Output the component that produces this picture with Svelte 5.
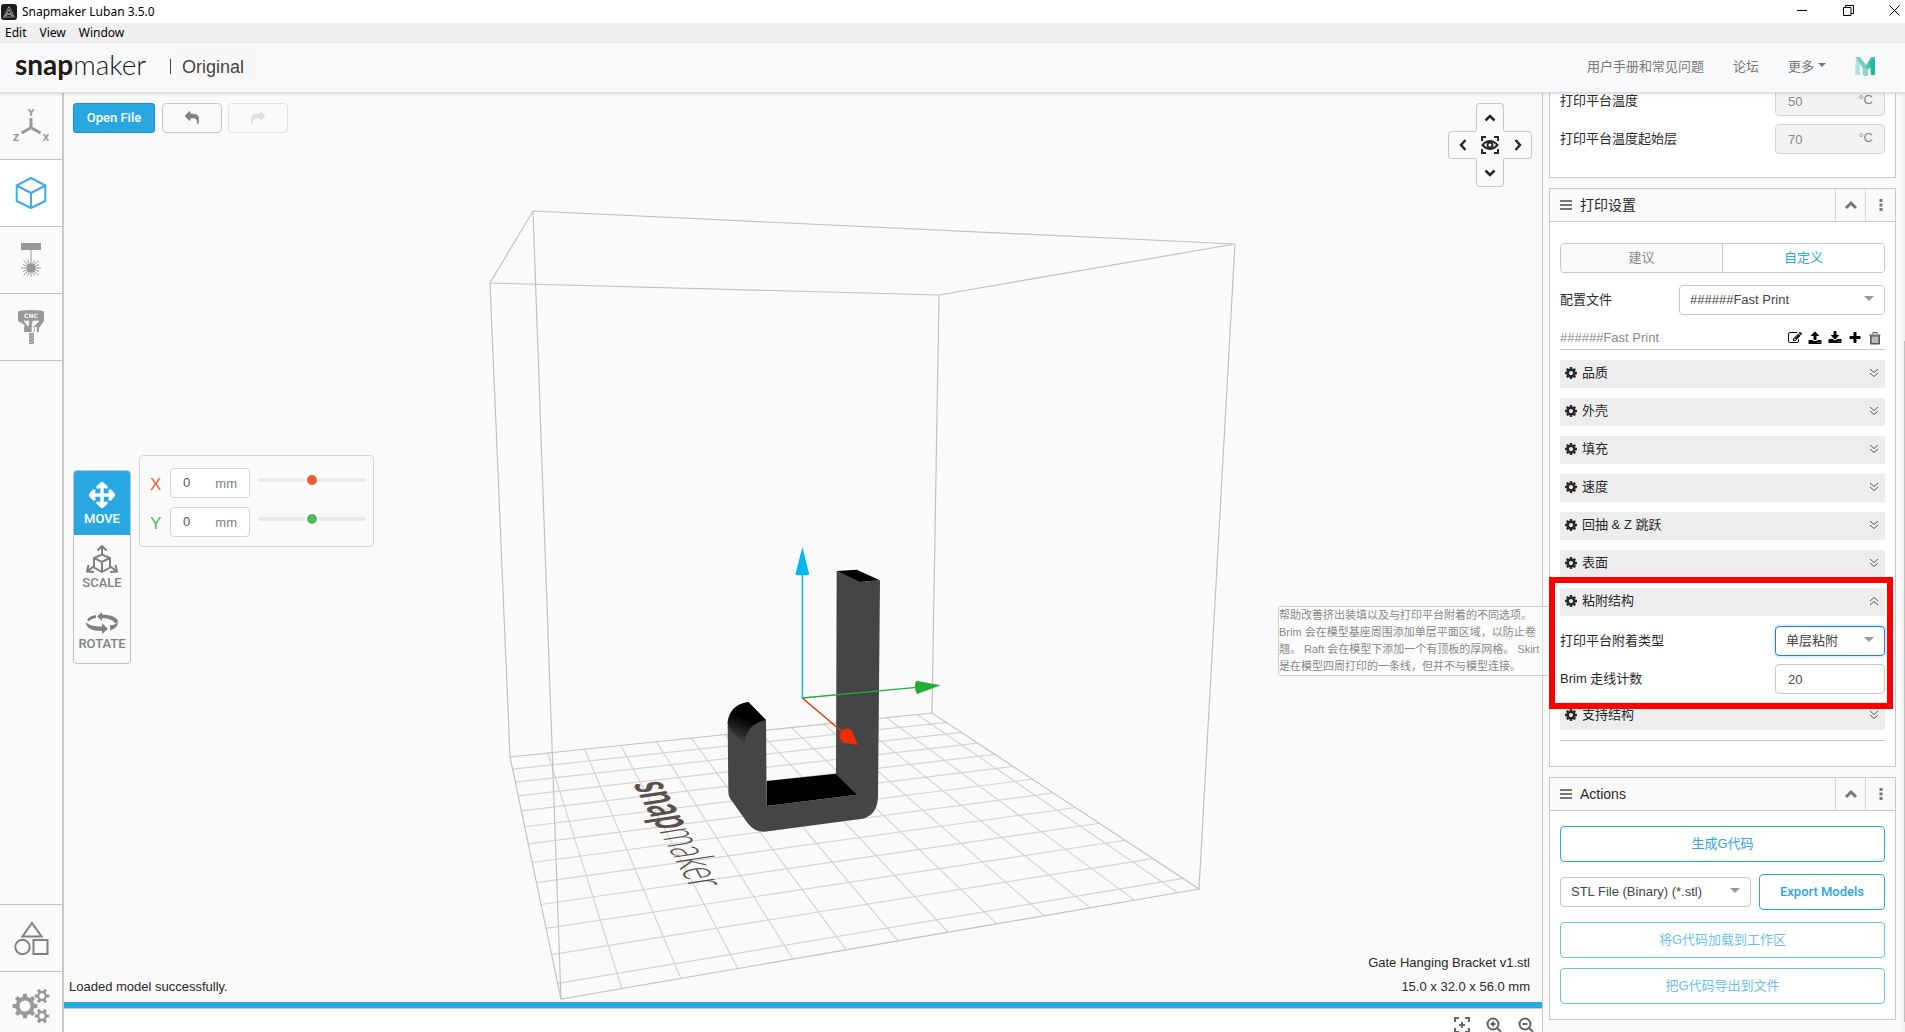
<script>
  const menus = ['Edit', 'View', 'Window'];
  const categories = ['品质', '外壳', '填充', '速度', '回抽 & Z 跳跃', '表面'];
  const temperatures = [
    { id: 'bed-temp', label: '打印平台温度', value: 50 },
    { id: 'bed-temp-first', label: '打印平台温度起始层', value: 70 },
  ];

  let moveX = $state(0);
  let moveY = $state(0);
  let tab = $state('custom');
  let brimCount = $state(20);

  const COG = 'M1152 896q0-106-75-181t-181-75-181 75-75 181 75 181 181 75 181-75 75-181zm512-109v222q0 12-8 23t-20 13l-185 28q-19 54-39 91 35 50 107 138 10 12 10 25t-9 23q-27 37-99 108t-94 71q-12 0-26-9l-138-108q-44 23-91 38-16 136-29 186-7 28-36 28h-222q-14 0-24.5-8.5t-11.5-21.5l-28-184q-49-16-90-37l-141 107q-10 9-25 9-14 0-25-11-126-114-165-168-7-10-7-23 0-12 8-23 15-21 51-66.5t54-70.5q-27-50-41-99l-183-27q-13-2-21-12.5t-8-23.5v-222q0-12 8-23t19-13l186-28q14-46 39-92-40-57-107-138-10-12-10-24 0-10 9-23 26-36 98.5-107.5t94.5-71.5q13 0 26 10l138 107q44-23 91-38 16-136 29-186 7-28 36-28h222q14 0 24.5 8.5t11.5 21.5l28 184q49 16 90 37l142-107q9-9 24-9 13 0 25 10 129 119 165 170 7 8 7 22 0 12-8 23-15 21-51 66.5t-54 70.5q26 50 41 98l183 28q13 2 21 12.5t8 23.5z';
  const SHARE = 'M1792 640q0 26-19 45l-512 512q-19 19-45 19t-45-19-19-45v-256h-224q-98 0-175.5 6t-154 21.5-133 42.5-105.5 69.5-80 101-48.5 138.5-17.5 181q0 55 5 123 0 6 2.5 23.5t2.5 26.5q0 15-8.5 25t-23.5 10q-16 0-28-17-7-9-13-22t-13.5-30-10.5-24q-127-285-127-451 0-199 53-333 162-403 875-403h224v-256q0-26 19-45t45-19 45 19l512 512q19 19 19 45z';
  const profileTools = [
    { name: 'Edit', d: 'M888 1184l116-116-152-152-116 116v56h96v96h56zm440-720q-16-16-33 1l-350 350q-17 17-1 33t33-1l350-350q17-17 1-33zm80 594v190q0 119-84.5 203.5t-203.5 84.5h-832q-119 0-203.5-84.5t-84.5-203.5v-832q0-119 84.5-203.5t203.5-84.5h832q63 0 117 25 15 7 18 23 3 17-9 29l-49 49q-14 14-32 8-23-6-45-6h-832q-66 0-113 47t-47 113v832q0 66 47 113t113 47h832q66 0 113-47t47-113v-126q0-13 9-22l64-64q15-15 35-7t20 29zm-96-738l288 288-672 672h-288v-288zm444 132l-92 92-288-288 92-92q28-28 68-28t68 28l152 152q28 28 28 68t-28 68z' },
    { name: 'Import', d: 'M1344 1472q0-26-19-45t-45-19-45 19-19 45 19 45 45 19 45-19 19-45zm256 0q0-26-19-45t-45-19-45 19-19 45 19 45 45 19 45-19 19-45zm128-224v320q0 40-28 68t-68 28h-1472q-40 0-68-28t-28-68v-320q0-40 28-68t68-28h427q21 56 70.5 92t110.5 36h256q61 0 110.5-36t70.5-92h427q40 0 68 28t28 68zm-325-648q-17 40-59 40h-256v448q0 26-19 45t-45 19h-256q-26 0-45-19t-19-45v-448h-256q-42 0-59-40-17-39 14-69l448-448q18-19 45-19t45 19l448 448q31 30 14 69z' },
    { name: 'Export', d: 'M1344 1344q0-26-19-45t-45-19-45 19-19 45 19 45 45 19 45-19 19-45zm256 0q0-26-19-45t-45-19-45 19-19 45 19 45 45 19 45-19 19-45zm128-224v320q0 40-28 68t-68 28h-1472q-40 0-68-28t-28-68v-320q0-40 28-68t68-28h465l135 136q58 56 136 56t136-56l136-136h464q40 0 68 28t28 68zm-325-569q17 41-14 70l-448 448q-18 19-45 19t-45-19l-448-448q-31-29-14-70 17-39 59-39h256v-448q0-26 19-45t45-19h256q26 0 45 19t19 45v448h256q42 0 59 39z' },
    { name: 'Add', d: 'M1600 736v192q0 40-28 68t-68 28h-416v416q0 40-28 68t-68 28h-192q-40 0-68-28t-28-68v-416h-416q-40 0-68-28t-28-68v-192q0-40 28-68t68-28h416v-416q0-40 28-68t68-28h192q40 0 68 28t28 68v416h416q40 0 68 28t28 68z' },
  ];

  // build volume corners on screen: back-left, back-right, front-right, front-left
  const top = [[490, 283], [939, 295], [1235, 244], [533, 211]];
  const bottom = [[510, 757], [932, 713], [1199, 889], [561, 999]];
  const CELLS = 12.5;

  // perspective mapping of the unit square onto the print bed
  function project(u, v) {
    const [[x0, y0], [x1, y1], [x2, y2], [x3, y3]] = bottom;
    const sx = x0 - x1 + x2 - x3;
    const sy = y0 - y1 + y2 - y3;
    const det = (x1 - x2) * (y3 - y2) - (x3 - x2) * (y1 - y2);
    const g = (sx * (y3 - y2) - (x3 - x2) * sy) / det;
    const h = ((x1 - x2) * sy - sx * (y1 - y2)) / det;
    const w = g * u + h * v + 1;
    return [
      ((x1 - x0 + g * x1) * u + (x3 - x0 + h * x3) * v + x0) / w,
      ((y1 - y0 + g * y1) * u + (y3 - y0 + h * y3) * v + y0) / w,
    ];
  }

  const bedLines = [];
  for (let i = 1; i < CELLS; i++) {
    const t = i / CELLS;
    bedLines.push([project(t, 0), project(t, 1)], [project(0, t), project(1, t)]);
  }

  const points = (list) => list.map((p) => p.join(',')).join(' ');

  function gear(cx, cy, r, root, teeth) {
    const out = [];
    const step = (Math.PI * 2) / teeth;
    for (let i = 0; i < teeth; i++) {
      const a = i * step;
      for (const [k, rad] of [[-0.3, root], [-0.2, r], [0.2, r], [0.3, root]]) {
        out.push([cx + rad * Math.cos(a + k * step), cy + rad * Math.sin(a + k * step)]);
      }
    }
    return points(out);
  }
</script>

{#snippet cog()}
  <svg class="cog" viewBox="0 0 1792 1792"><path d={COG} /></svg>
{/snippet}

{#snippet category(name, open)}
  <button class="category">
    {@render cog()}
    <span>{name}</span>
    <svg class="double" class:open viewBox="0 0 10 10"><path d="M1 1l4 3.500 4-3.500M1 5l4 3.500 4-3.500" /></svg>
  </button>
{/snippet}

{#snippet cardHeader(title)}
  <header class="card-header">
    <svg class="bars" viewBox="0 0 12 12"><path d="M0 2h12M0 6h12M0 10h12" /></svg>
    <h3>{title}</h3>
    <button class="head-btn" aria-label="Collapse">
      <svg width="14" height="10" viewBox="0 0 14 10"><path d="M2 8l5-5 5 5" fill="none" stroke="#777" stroke-width="3" /></svg>
    </button>
    <button class="head-btn" aria-label="More">
      <svg width="4" height="12" viewBox="0 0 4 12"><path d="M0.500 0h3v3h-3zM0.500 4.500h3v3h-3zM0.500 9h3v3h-3z" fill="#777" /></svg>
    </button>
  </header>
{/snippet}

{#snippet axisRow(name, value, color)}
  <div class="axis-row">
    <label for="move-{name}" class="axis-{color}">{name}</label>
    <div class="axis-input">
      <input id="move-{name}" type="text" {value} />
      <span>mm</span>
    </div>
    <input type="range" class="slider thumb-{color}" min="-160" max="160" {value} aria-label="{name} position" />
  </div>
{/snippet}

<div class="window">
  <div class="titlebar">
    <svg width="16" height="16" viewBox="0 0 16 16">
      <rect width="16" height="16" rx="3" fill="#1b1b1b" />
      <path d="M8 2.500L13.500 13h-11zM8 5.500l-3.500 7M8 5.500l3 7M5 9.500l7 2M11 8.500L3.500 12" fill="none" stroke="#aaa" stroke-width=".8" />
    </svg>
    <span class="title">Snapmaker Luban 3.5.0</span>
    <div class="window-controls">
      <button aria-label="Minimize"><svg width="11" height="11" viewBox="0 0 11 11"><path d="M0 5.500h10" /></svg></button>
      <button aria-label="Restore"><svg width="11" height="11" viewBox="0 0 11 11"><path d="M.5 2.500h7.500v8h-7.500zM2.500 2.500v-2h8v8h-2.500" /></svg></button>
      <button aria-label="Close"><svg width="11" height="11" viewBox="0 0 11 11"><path d="M.5.5l10 10M10.500.5l-10 10" /></svg></button>
    </div>
  </div>

  <nav class="menubar">
    {#each menus as menu}
      <button>{menu}</button>
    {/each}
  </nav>

  <header class="navbar">
    <a class="brand" href="#home"><b>snap</b>maker</a>
    <span class="machine"><i></i>Original</span>
    <nav class="links">
      <a href="#faq">用户手册和常见问题</a>
      <a href="#forum">论坛</a>
      <a href="#more" class="more">更多</a>
      <a href="#mysnap" aria-label="MyMiniFactory">
        <svg width="21" height="19" viewBox="0 0 21 19">
          <path d="M1 0h4v18h-5z" fill="#b5e3db" />
          <path d="M1 0h4l6 8 0 10h-3v-6z" fill="#7accbe" />
          <path d="M16 0h4v5l-7 8-5 1z" fill="#4cc3ae" />
          <path d="M15 5l5-5v18h-4z" fill="#22b89f" />
          <path d="M8 10l3 2 2-1v8h-4z" fill="#8ed6ca" />
        </svg>
      </a>
    </nav>
  </header>

  <div class="body">
    <aside class="sidebar">
      <button aria-label="Workspace">
        <svg width="36" height="34" viewBox="0 0 36 34">
          <path d="M18 9v10M17.500 19l-9 5M18.500 19l9 5" stroke="#999" stroke-width="3" />
          <text x="18" y="7" class="axis-glyph">Y</text>
          <text x="3" y="32" class="axis-glyph">Z</text>
          <text x="33" y="32" class="axis-glyph">X</text>
        </svg>
      </button>
      <button class="active" aria-label="3D printing">
        <svg width="32" height="34" viewBox="0 0 32 34">
          <path d="M16 2l14.300 7.500v15.500L16 32 1.700 25V9.500zM1.700 9.500L16 17l14.300-7.500M16 17v15" fill="none" stroke="#3fa9f5" stroke-width="2" stroke-linejoin="round" />
        </svg>
      </button>
      <button aria-label="Laser">
        <svg width="22" height="36" viewBox="0 0 22 36">
          <path d="M1 1h20v7H1z" fill="#999" />
          <circle cx="11" cy="26" r="4.500" fill="#999" />
          <path d="M11 8v27M1 26h20M3.500 18.500l15 15M18.500 18.500l-15 15M7.500 18l7 16M14.500 18l-7 16M3 22.500l16 7M19 22.500l-16 7" stroke="#999" stroke-width="1" />
        </svg>
      </button>
      <button aria-label="CNC">
        <svg width="28" height="36" viewBox="0 0 28 36">
          <path d="M1 3q0-2 13-2t13 2v9l-5 7v4H7v-7L1 12z" fill="#999" />
          <path d="M7 12l4 5 1-5zM16 12l-1 5h2l5-5zM15 18h1.500v5H15zM18 18h1.500v5H18zM4 13l4 5" fill="#fafafa" stroke="#fafafa" stroke-width=".7" />
          <text x="14" y="9" class="cnc-glyph">CNC</text>
          <path d="M12 24h5v11h-5z" fill="#bbb" />
          <path d="M12 26l5-2M12 29l5-2M12 32l5-2M12 35l5-2" stroke="#888" stroke-width="1" />
        </svg>
      </button>
      <div class="spacer"></div>
      <button aria-label="Models">
        <svg width="36" height="36" viewBox="0 0 36 36" fill="none" stroke="#808080" stroke-width="2">
          <path d="M19 3L28.500 16.500h-19zM20.500 20h14v14h-14z" />
          <circle cx="9.500" cy="27" r="7.200" />
        </svg>
      </button>
      <button aria-label="Settings">
        <svg width="38" height="36" viewBox="0 0 38 36">
          <polygon points={gear(13, 18, 12.5, 9.5, 8)} fill="#999" />
          <circle cx="13" cy="18" r="5.500" fill="#fafafa" />
          <polygon points={gear(30, 8, 7.5, 5, 6)} fill="#999" />
          <circle cx="30" cy="8" r="2.700" fill="#fafafa" />
          <polygon points={gear(30, 28, 7.5, 5, 6)} fill="#999" />
          <circle cx="30" cy="28" r="2.700" fill="#fafafa" />
        </svg>
      </button>
    </aside>

    <main class="visualizer">
      <div class="canvas">
        <svg class="scene" viewBox="64 93 1478 909" preserveAspectRatio="xMidYMid meet">
          <defs>
            <linearGradient id="hook" gradientUnits="userSpaceOnUse" x1="205" y1="540" x2="165" y2="635">
              <stop offset=".25" stop-color="#000" />
              <stop offset="1" stop-color="#454545" />
            </linearGradient>
          </defs>
          {#each bedLines as [a, b]}
            <line x1={a[0]} y1={a[1]} x2={b[0]} y2={b[1]} class="bed-line" />
          {/each}
          <text class="bed-logo" transform="matrix(.46 .83 -1.95 .3 633 784)"><tspan class="heavy">snap</tspan>maker</text>
          <polygon points={points(bottom)} class="volume" />
          <polygon points={points(top)} class="volume" />
          {#each top as corner, i}
            <line x1={corner[0]} y1={corner[1]} x2={bottom[i][0]} y2={bottom[i][1]} class="volume" />
          {/each}
          <g transform="translate(680 530) scale(.33333)">
            <path d="M470 123L538 156 600 151 594 800Q592 862 535 868L252 905Q222 905 202 878L150 805Q145 797 145 780L143 575Q150 524 205 516L258 570 260 828 532 794 468 731z" fill="#454545" />
            <path d="M470 123L530 119 600 151 538 156z" fill="#000" />
            <path d="M260 753L468 731 532 794 260 828z" fill="#000" />
            <path d="M143 578Q150 524 205 516L258 570Q200 580 193 640L150 600z" fill="url(#hook)" />
            <path d="M367 505V130" stroke="#00b7f1" stroke-width="4" />
            <path d="M367 51L388 134Q367 138 346 134z" fill="#00b7f1" />
            <path d="M367 504L710 472" stroke="#22ac38" stroke-width="4" />
            <path d="M782 466L711 492Q700 472 708 452z" fill="#22ac38" />
            <path d="M367 504L490 608" stroke="#eb2f00" stroke-width="4" />
            <path d="M534 645L490 638Q475 626 480 610 490 592 510 597L516 602z" fill="#eb2f00" />
          </g>
        </svg>

        <div class="toolbar">
          <button class="open-file">Open File</button>
          <button class="tool" aria-label="Undo"><svg class="flip" width="14" height="14" viewBox="0 0 1792 1792"><path d={SHARE} /></svg></button>
          <button class="tool" aria-label="Redo" disabled><svg width="14" height="14" viewBox="0 0 1792 1792"><path d={SHARE} /></svg></button>
        </div>

        <div class="view-pad">
          <button class="up" aria-label="Top view"><svg width="12" height="12" viewBox="0 0 12 12"><path d="M1.500 8.500L6 4l4.500 4.500" /></svg></button>
          <button class="left" aria-label="Left view"><svg width="12" height="12" viewBox="0 0 12 12"><path d="M8.500 1L4 6l4.500 5" /></svg></button>
          <button class="center" aria-label="Reset view">
            <svg width="18" height="18" viewBox="0 0 18 18">
              <path d="M1 5V1h4M13 1h4v4M17 13v4h-4M5 17H1v-4M1.500 9Q9 1 16.500 9 9 17 1.500 9z" />
              <circle cx="9" cy="9" r="2.500" />
            </svg>
          </button>
          <button class="right" aria-label="Right view"><svg width="12" height="12" viewBox="0 0 12 12"><path d="M3.500 1L8 6l-4.500 5" /></svg></button>
          <button class="down" aria-label="Bottom view"><svg width="12" height="12" viewBox="0 0 12 12"><path d="M1.500 3.500L6 8l4.500-4.500" /></svg></button>
        </div>

        <div class="transform">
          <div class="modes">
            <button class="selected">
              <svg width="28" height="28" viewBox="0 0 28 28" fill="none" stroke="#fff" stroke-width="3.500" stroke-linecap="round" stroke-linejoin="round">
                <path d="M14 3v22M3 14h22M10 6l4-3.500L18 6M10 22l4 3.500 4-3.500M6 10l-3.500 4L6 18M22 10l3.500 4-3.500 4" />
              </svg>
              MOVE
            </button>
            <button>
              <svg width="32" height="28" viewBox="0 0 32 28" fill="none" stroke="#808080" stroke-width="2">
                <path d="M16 1v8M11.500 5.500L16 1l4.500 4.500M8 13l8-3.500 8 3.500v9.500L16 27l-8-4.500zM8 13l8 4 8-4M16 17v10M8 21l-6 5M2.500 20L1 26.500l7 .5M24 21l6 5M29.500 20l1.500 6.500-7 .5" />
              </svg>
              SCALE
            </button>
            <button>
              <svg width="32" height="22" viewBox="0 0 32 22" fill="#808080">
                <path d="M11 4.500L16 0v2.500q15 .5 16 7.500l-3 1.500Q27 6.500 16 6v3zM1 8q2-4 9-5v3Q4 7 3 9.500zM0 10q3 4.500 16 4.500V11l6 6-6 5v-3Q0 19 0 10zM24 13.500q6-1 8-3.500 0 6-8 8.500z" />
              </svg>
              ROTATE
            </button>
          </div>
          <div class="move-panel">
            {@render axisRow('X', moveX, 'red')}
            {@render axisRow('Y', moveY, 'green')}
          </div>
        </div>

        <span class="status">Loaded model successfully.</span>
        <div class="model-info">
          <span>Gate Hanging Bracket v1.stl</span>
          <span>15.0 x 32.0 x 56.0 mm</span>
        </div>
      </div>
      <div class="progress"></div>
      <div class="zoom-bar">
        <button aria-label="Fit"><svg width="16" height="16" viewBox="0 0 16 16"><path d="M1 5V1h4M11 1h4v4M15 11v4h-4M5 15H1v-4M8 5v6M5 8h6" /></svg></button>
        <button aria-label="Zoom in"><svg width="16" height="16" viewBox="0 0 16 16"><circle cx="7" cy="7" r="5.500" /><path d="M11 11l4 4M7 4.500v5M4.500 7h5" /></svg></button>
        <button aria-label="Zoom out"><svg width="16" height="16" viewBox="0 0 16 16"><circle cx="7" cy="7" r="5.500" /><path d="M11 11l4 4M4.500 7h5" /></svg></button>
      </div>
    </main>

    <section class="settings">
      <div class="settings-list">
        <div class="card temps">
          {#each temperatures as t}
            <div class="row">
              <label for={t.id}>{t.label}</label>
              <div class="temp-input">
                <input id={t.id} type="text" value={t.value} disabled />
                <span>°C</span>
              </div>
            </div>
          {/each}
        </div>

        <div class="card">
          {@render cardHeader('打印设置')}
          <div class="card-body print">
            <div class="tabs">
              <button class:on={tab === 'recommended'} onclick={() => (tab = 'recommended')}>建议</button>
              <button class:on={tab === 'custom'} onclick={() => (tab = 'custom')}>自定义</button>
            </div>
            <div class="row profile">
              <label for="profile">配置文件</label>
              <div class="select wide">
                <select id="profile"><option>######Fast Print</option></select>
              </div>
            </div>
            <div class="profile-name">
              <span>######Fast Print</span>
              {#each profileTools as tool}
                <button aria-label={tool.name}><svg width="14" height="14" viewBox="0 0 1792 1792"><path d={tool.d} /></svg></button>
              {/each}
              <button aria-label="Delete">
                <svg width="14" height="14" viewBox="0 0 14 14" fill="none" stroke="#555">
                  <path d="M3 5h8v7.500H3z" fill="#bbb" /><path d="M1.500 4h11M5 3.500V1.500h4v2M2.500 4v9h9V4" />
                </svg>
              </button>
            </div>
            {#each categories as name}
              {@render category(name, false)}
            {/each}
            <div class="adhesion">
              {@render category('粘附结构', true)}
              <div class="row">
                <label for="adhesion">打印平台附着类型</label>
                <div class="select focused">
                  <select id="adhesion"><option>单层粘附</option></select>
                </div>
              </div>
              <div class="row">
                <label for="brim">Brim 走线计数</label>
                <input id="brim" class="number" type="text" bind:value={brimCount} />
              </div>
              <div class="highlight"></div>
              <div class="tooltip">
                帮助改善挤出装填以及与打印平台附着的不同选项。<br />Brim 会在模型基座周围添加单层平面区域，以防止卷<br />翘。 Raft 会在模型下添加一个有顶板的厚网格。 Skirt<br />是在模型四周打印的一条线，但并不与模型连接。
              </div>
            </div>
            {@render category('支持结构', false)}
            <hr />
          </div>
        </div>

        <div class="card">
          {@render cardHeader('Actions')}
          <div class="card-body actions">
            <button class="outline">生成G代码</button>
            <div class="export">
              <div class="select">
                <select aria-label="Export format"><option>STL File (Binary) (*.stl)</option></select>
              </div>
              <button class="outline strong">Export Models</button>
            </div>
            <button class="outline" disabled>将G代码加载到工作区</button>
            <button class="outline" disabled>把G代码导出到文件</button>
          </div>
        </div>
      </div>
      <div class="scrollbar"><i></i></div>
    </section>
  </div>
</div>

<style>
  :global(body) {
    margin: 0;
    background: #fafafa;
  }

  .window, .window * {
    box-sizing: border-box;
  }

  .window {
    display: flex;
    flex-direction: column;
    height: 100vh;
    overflow: hidden;
    font: 13px/20px 'Liberation Sans', 'Noto Sans CJK SC', sans-serif;
    color: #282828;
  }

  button, input, select {
    font: inherit;
    color: inherit;
    margin: 0;
    padding: 0;
    border: 0;
    background: none;
  }

  a {
    color: inherit;
    text-decoration: none;
  }

  svg {
    display: block;
    flex: none;
  }

  .titlebar {
    display: flex;
    align-items: center;
    height: 23px;
    padding-left: 1px;
    background: #fff;
    color: #000;
    font: 12px/18px 'Noto Sans', sans-serif;
    flex: none;
  }

  .title {
    margin-left: 5px;
  }

  .window-controls {
    display: flex;
    gap: 35px;
    margin-left: auto;
    padding: 0 5px 3px 0;
  }

  .window-controls path {
    fill: none;
    stroke: #000;
  }

  .menubar {
    display: flex;
    gap: 13px;
    height: 20px;
    padding-left: 5px;
    background: #efefef;
    color: #000;
    font: 12px/20px 'Noto Sans', sans-serif;
    flex: none;
  }

  .navbar {
    display: flex;
    align-items: center;
    height: 50px;
    padding: 0 29px 2px 15px;
    background: #f8f9fb;
    border-bottom: 1px solid #dedede;
    box-shadow: 0 1px 3px rgba(0, 0, 0, 0.15);
    flex: none;
    position: relative;
    z-index: 3;
  }

  .brand {
    width: 155px;
    padding-bottom: 6px;
    font: 300 28px/40px Lato, sans-serif;
    color: #231815;
  }

  .brand b {
    font-weight: 700;
  }

  .machine {
    display: flex;
    align-items: center;
    gap: 11px;
    padding-right: 12px;
    background: #f8f8f8;
    font: 18px/36px 'Liberation Sans', sans-serif;
    color: #444;
  }

  .machine i {
    width: 1px;
    height: 15px;
    background: #444;
  }

  .links {
    display: flex;
    align-items: center;
    gap: 29px;
    margin-left: auto;
    color: #777;
  }

  .more::after {
    content: '';
    display: inline-block;
    margin-left: 4px;
    vertical-align: 4px;
    border: 4px solid transparent;
    border-top-color: #777;
    border-bottom: 0;
  }

  .body {
    display: flex;
    flex: 1;
    min-height: 0;
  }

  .sidebar {
    display: flex;
    flex-direction: column;
    width: 64px;
    background: #fafafa;
    border-right: 2px solid #c8c8c8;
    flex: none;
  }

  .sidebar button {
    display: flex;
    align-items: center;
    justify-content: center;
    height: 67px;
    border-bottom: 1px solid #c0c0c0;
    flex: none;
  }

  .sidebar .spacer {
    flex: 1;
    border-bottom: 1px solid #c0c0c0;
  }

  .sidebar button:last-child {
    height: 60px;
    border: 0;
    padding-top: 7px;
  }

  .sidebar .active {
    background: #fff;
  }

  .axis-glyph {
    font: bold 9px 'DejaVu Sans', sans-serif;
    text-anchor: middle;
    fill: #999;
  }

  .cnc-glyph {
    font: bold 6px 'DejaVu Sans', sans-serif;
    text-anchor: middle;
    fill: #fafafa;
  }

  .visualizer {
    display: flex;
    flex-direction: column;
    flex: 1;
    min-width: 0;
  }

  .canvas {
    position: relative;
    flex: 1;
    min-height: 0;
    background: #fafafa;
  }

  .scene {
    position: absolute;
    inset: 0;
    width: 100%;
    height: 100%;
  }

  .bed-line {
    stroke: #d4d4d4;
    stroke-width: 1.200;
  }

  .volume {
    fill: none;
    stroke: #c2c2c2;
    stroke-width: 1.200;
  }

  .bed-logo {
    font: 300 27px Lato, sans-serif;
    fill: #5a504e;
  }

  .bed-logo .heavy {
    font-weight: 700;
  }

  .toolbar {
    position: absolute;
    top: 10px;
    left: 9px;
    display: flex;
    gap: 6px;
  }

  .open-file {
    width: 82px;
    height: 30px;
    margin-right: 1px;
    border: 1px solid #1a8fcb;
    border-radius: 3px;
    background: #28a7e1;
    color: #fff;
    font-family: Roboto, sans-serif;
    font-weight: 500;
  }

  .tool {
    display: flex;
    align-items: center;
    justify-content: center;
    width: 60px;
    height: 30px;
    border: 1px solid #c8c8c8;
    border-radius: 4px;
  }

  .tool path {
    fill: #808080;
    stroke: #808080;
    stroke-width: 90;
  }

  .tool:disabled {
    border-color: #e0e0e0;
  }

  .tool:disabled path {
    fill: #e0e0e0;
    stroke: #e0e0e0;
  }

  .flip {
    transform: scaleX(-1);
  }

  .view-pad {
    position: absolute;
    top: 10px;
    right: 10px;
    display: grid;
    grid-template: 28px 28px 28px / 28px 28px 28px;
  }

  .view-pad button {
    display: flex;
    align-items: center;
    justify-content: center;
    border: 1px solid #c8c8c8;
  }

  .view-pad path, .view-pad circle {
    fill: none;
    stroke: #282828;
    stroke-width: 2;
  }

  .view-pad button:not(.center) path {
    stroke-width: 2.500;
  }

  .view-pad .up {
    grid-area: 1 / 2;
    border-bottom: 0;
    border-radius: 4px 4px 0 0;
  }

  .view-pad .left {
    grid-area: 2 / 1;
    border-right: 0;
    border-radius: 4px 0 0 4px;
  }

  .view-pad .center {
    grid-area: 2 / 2;
    border: 0;
  }

  .view-pad .right {
    grid-area: 2 / 3;
    border-left: 0;
    border-radius: 0 4px 4px 0;
  }

  .view-pad .down {
    grid-area: 3 / 2;
    border-top: 0;
    border-radius: 0 0 4px 4px;
  }

  .transform {
    position: absolute;
    top: 362px;
    left: 9px;
    display: flex;
    align-items: flex-start;
    gap: 8px;
  }

  .modes {
    display: flex;
    flex-direction: column;
    width: 58px;
    margin-top: 15px;
    border: 1px solid #c0c0c0;
    border-radius: 4px;
    overflow: hidden;
  }

  .modes button {
    display: flex;
    flex-direction: column;
    align-items: center;
    justify-content: center;
    height: 64px;
    padding-top: 4px;
    font-family: Roboto, sans-serif;
    font-weight: 500;
    line-height: 20px;
    color: #808080;
  }

  .modes .selected {
    background: #28a7e1;
    color: #fff;
  }

  .move-panel {
    display: flex;
    flex-direction: column;
    gap: 9px;
    padding: 12px 7px 9px 10px;
    border: 1px solid #d5d5d5;
    border-radius: 4px;
  }

  .axis-row {
    display: flex;
    height: 30px;
  }

  .axis-row label {
    width: 20px;
    font-size: 17px;
    line-height: 34px;
  }

  .axis-red {
    color: #f05a35;
  }

  .axis-green {
    color: #4cbb5c;
  }

  .axis-input {
    display: flex;
    width: 80px;
    margin-right: 8px;
    padding: 0 12px;
    border: 1px solid #d5d5d5;
    border-radius: 4px;
    background: #fff;
    line-height: 30px;
    color: #808080;
  }

  .axis-input input {
    width: 100%;
    min-width: 0;
    height: 28px;
    color: #555;
  }

  .slider {
    appearance: none;
    width: 108px;
    height: 24px;
  }

  .slider::-webkit-slider-runnable-track {
    height: 4px;
    border-radius: 2px;
    background: #e9e9e9;
  }

  .slider::-webkit-slider-thumb {
    appearance: none;
    width: 14px;
    height: 14px;
    margin-top: -5px;
    border: 2px solid #fff;
    border-radius: 50%;
    background: #f05a35;
  }

  .thumb-green::-webkit-slider-thumb {
    background: #4cbb5c;
  }

  .status {
    position: absolute;
    left: 5px;
    bottom: 5px;
  }

  .model-info {
    position: absolute;
    right: 12px;
    bottom: 5px;
    display: flex;
    flex-direction: column;
    gap: 4px;
    text-align: right;
  }

  .progress {
    height: 6px;
    background: #28a7e1;
  }

  .zoom-bar {
    display: flex;
    justify-content: flex-end;
    gap: 16px;
    height: 24px;
    padding: 8px 8px 0 0;
    border-top: 1px solid #c8c8c8;
    background: #fff;
    overflow: hidden;
  }

  .zoom-bar svg {
    fill: none;
    stroke: #666;
    stroke-width: 2;
  }

  .settings {
    display: flex;
    width: 363px;
    border-left: 1px solid #c8c8c8;
    background: #fafafa;
    flex: none;
  }

  .settings-list {
    display: flex;
    flex-direction: column;
    gap: 10px;
    flex: 1;
    margin-top: -8px;
    padding: 0 6px;
  }

  .scrollbar {
    width: 3px;
    padding: 248px 0 10px 2px;
    background: #f1f1f1;
  }

  .scrollbar i {
    display: block;
    height: 100%;
    background: #c1c1c1;
  }

  .card {
    border: 1px solid #c8c8c8;
    background: #fff;
  }

  .temps {
    display: flex;
    flex-direction: column;
    gap: 8px;
    padding: 0 10px 23px;
  }

  .row {
    display: flex;
    align-items: center;
    justify-content: space-between;
    height: 30px;
  }

  .temp-input {
    display: flex;
    width: 110px;
    padding: 0 11px 0 12px;
    border: 1px solid #d5d5d5;
    border-radius: 4px;
    background: #f3f3f3;
    line-height: 26px;
    color: #888;
  }

  .temp-input input {
    width: 100%;
    min-width: 0;
    height: 28px;
  }

  .card-header {
    display: flex;
    align-items: center;
    height: 33px;
    padding-left: 10px;
    border-bottom: 1px solid #c8c8c8;
    background: #fafafa;
  }

  .bars {
    width: 12px;
    height: 12px;
    stroke: #777;
    stroke-width: 2;
  }

  .card-header h3 {
    flex: 1;
    margin: 0 0 0 8px;
    font-size: 14px;
    font-weight: 400;
  }

  .head-btn {
    display: flex;
    align-items: center;
    justify-content: center;
    width: 30px;
    height: 32px;
    border-left: 1px solid #d5d5d5;
  }

  .card-body {
    display: flex;
    flex-direction: column;
    padding: 0 10px;
  }

  .print {
    gap: 10px;
    padding-top: 21px;
    padding-bottom: 25px;
  }

  .tabs {
    display: flex;
    height: 30px;
    margin-bottom: 2px;
    border: 1px solid #c8c8c8;
    border-radius: 4px;
    overflow: hidden;
    line-height: 26px;
  }

  .tabs button {
    flex: 1;
    background: #fafafa;
    color: #888;
  }

  .tabs button + button {
    border-left: 1px solid #c8c8c8;
  }

  .tabs .on {
    background: #fff;
    color: #28a7e1;
  }

  .select {
    position: relative;
    width: 110px;
    height: 30px;
    border: 1px solid #c8c8c8;
    border-radius: 4px;
    background: #fff;
  }

  .select::after {
    content: '';
    position: absolute;
    top: 10px;
    right: 10px;
    border: 5px solid transparent;
    border-top-color: #999;
    border-bottom: 0;
    pointer-events: none;
  }

  .select select {
    appearance: none;
    width: 100%;
    height: 28px;
    padding: 0 24px 0 10px;
    color: #444;
  }

  .wide {
    width: 206px;
  }

  .focused {
    border-color: #1a80f0;
    box-shadow: 0 0 0 2px #e0f0fd;
  }

  .profile-name {
    display: flex;
    align-items: center;
    gap: 6px;
    height: 25px;
    padding: 2px 3px 0 0;
    border-bottom: 1px solid #c8c8c8;
    color: #888;
  }

  .profile-name button {
    color: #282828;
  }

  .profile-name span {
    flex: 1;
  }

  .category {
    display: flex;
    align-items: center;
    height: 28px;
    padding: 0 6px 2px 4px;
    background: #ededed;
    text-align: left;
    flex: none;
  }

  .category span {
    flex: 1;
  }

  .cog {
    width: 14px;
    height: 14px;
    margin-right: 4px;
    fill: #282828;
  }

  .double {
    width: 10px;
    height: 10px;
    fill: none;
    stroke: #555;
  }

  .double.open {
    transform: rotate(180deg);
  }

  .adhesion {
    position: relative;
    display: flex;
    flex-direction: column;
    gap: 8px;
    margin-bottom: -2px;
  }

  .adhesion .category + .row {
    margin-top: 2px;
  }

  .number {
    width: 110px;
    height: 30px;
    padding-left: 12px;
    border: 1px solid #c8c8c8;
    border-radius: 4px;
    color: #444;
  }

  /* callout drawn round the adhesion group */
  .highlight {
    position: absolute;
    inset: -11px -8px -15px -11px;
    border: 6px solid #f00;
    pointer-events: none;
    z-index: 2;
  }

  .tooltip {
    position: absolute;
    top: 18px;
    right: 333px;
    width: 274px;
    border: 1px solid #ccc;
    border-radius: 3px;
    background: rgba(255, 255, 255, 0.4);
    font-size: 11px;
    line-height: 17px;
    color: #888;
    white-space: nowrap;
    pointer-events: none;
  }

  hr {
    width: 100%;
    height: 1px;
    margin: 0;
    border: 0;
    background: #c8c8c8;
  }

  .actions {
    gap: 10px;
    padding-top: 15px;
    padding-bottom: 15px;
  }

  .outline {
    height: 36px;
    border: 1px solid #28a7e1;
    border-radius: 4px;
    background: #fff;
    color: #28a7e1;
  }

  .outline:disabled {
    opacity: 0.7;
  }

  .strong {
    width: 126px;
    font-family: Roboto, sans-serif;
    font-weight: 500;
  }

  .export {
    display: flex;
    align-items: center;
    gap: 8px;
    padding: 2px 0;
  }

  .export .select {
    flex: 1;
  }
</style>
